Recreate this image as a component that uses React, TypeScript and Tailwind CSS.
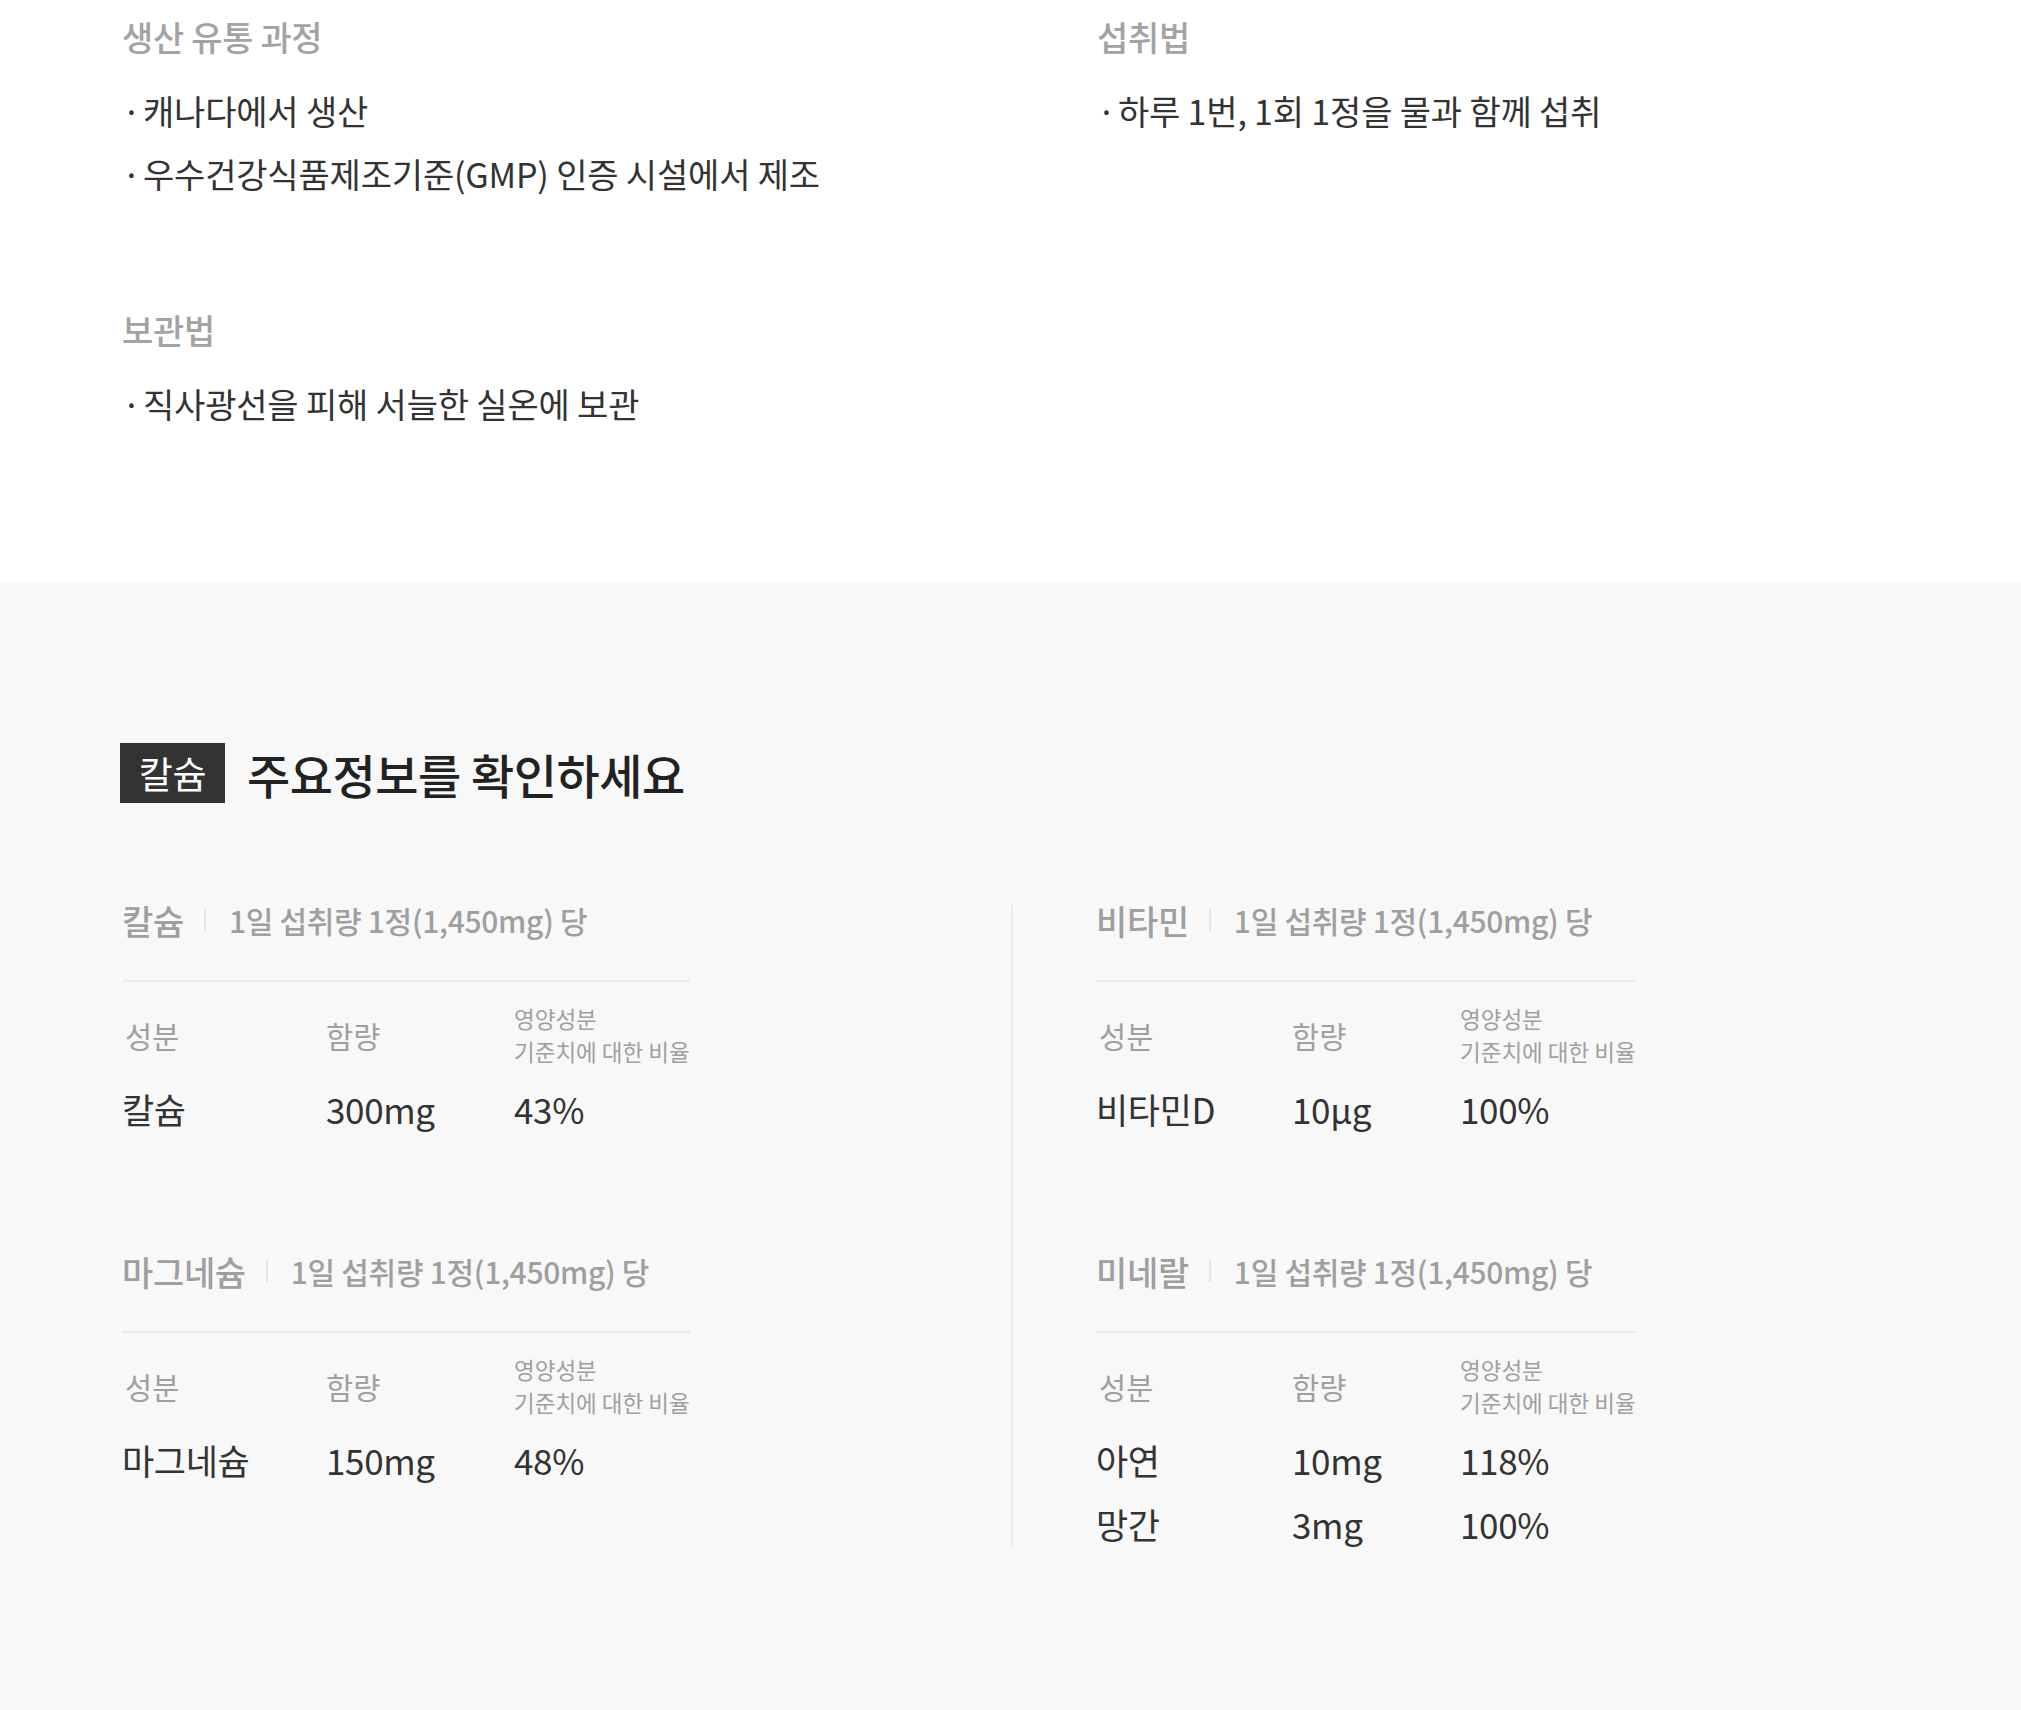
import type { ReactNode } from "react";

const font = { fontFamily: '"Noto Sans CJK KR", "Noto Sans", sans-serif' };

type Row = { name: string; amount: string; ratio: string };

interface Group {
  title: string;
  rows: Row[];
}

const leftGroups: Group[] = [
  { title: "칼슘", rows: [{ name: "칼슘", amount: "300mg", ratio: "43%" }] },
  { title: "마그네슘", rows: [{ name: "마그네슘", amount: "150mg", ratio: "48%" }] },
];

const rightGroups: Group[] = [
  { title: "비타민", rows: [{ name: "비타민D", amount: "10μg", ratio: "100%" }] },
  {
    title: "미네랄",
    rows: [
      { name: "아연", amount: "10mg", ratio: "118%" },
      { name: "망간", amount: "3mg", ratio: "100%" },
    ],
  },
];

function InfoBlock({ title, children }: { title: string; children: ReactNode }) {
  return (
    <div>
      <h3 className="text-[34px] leading-[40px] font-medium tracking-[-0.01em] text-[#a3a3a3]">{title}</h3>
      <ul className="mt-[22px]">{children}</ul>
    </div>
  );
}

function Item({ children }: { children: ReactNode }) {
  return (
    <li className="text-[34px] leading-[63px] tracking-[-0.005em] text-[#333]">
      <span className="mr-[2px]">·</span>
      {children}
    </li>
  );
}

function NutritionTable({ group, cols }: { group: Group; cols: [number, number, number] }) {
  const [c1, c2, c3] = cols;
  return (
    <div>
      <div className="flex h-[40px] items-center text-[#9f9f9f]">
        <span className="text-[34px] font-medium tracking-[-0.01em]">{group.title}</span>
        <span className="mr-[23px] ml-[20px] h-[22px] w-[2px] bg-[#e4e4e4]" />
        <span className="text-[30px] font-medium tracking-[-0.01em]">1일 섭취량 1정(1,450mg) 당</span>
      </div>
      <div className="mt-[40px] border-t-2 border-[#ebebeb]" style={{ width: c1 + c2 + c3 }}>
        <div className="mt-[18px] flex h-[70px] items-center text-[#a0a0a0]">
          <div className="pl-[3px] text-[29.5px]" style={{ width: c1 }}>성분</div>
          <div className="text-[29.5px]" style={{ width: c2 }}>함량</div>
          <div className="text-[22.5px] leading-[33px]" style={{ width: c3 }}>
            영양성분
            <br />
            기준치에 대한 비율
          </div>
        </div>
        <div className="mt-[17px] flex flex-col gap-[20px]">
          {group.rows.map((r) => (
            <div key={r.name} className="flex h-[44px] items-center text-[35px] tracking-[-0.01em] text-[#333]">
              <div style={{ width: c1 }}>{r.name}</div>
              <div style={{ width: c2 }}>{r.amount}</div>
              <div style={{ width: c3 }}>{r.ratio}</div>
            </div>
          ))}
        </div>
      </div>
    </div>
  );
}

export default function App() {
  return (
    <div className="flex min-h-screen flex-col bg-white" style={font}>
      <section className="grid grid-cols-[975px_1fr] pt-[17px] pb-[148px] pl-[122px]">
        <div>
          <InfoBlock title="생산 유통 과정">
            <Item>캐나다에서 생산</Item>
            <Item>우수건강식품제조기준(GMP) 인증 시설에서 제조</Item>
          </InfoBlock>
          <div className="mt-[105px]">
            <InfoBlock title="보관법">
              <Item>직사광선을 피해 서늘한 실온에 보관</Item>
            </InfoBlock>
          </div>
        </div>
        <div>
          <InfoBlock title="섭취법">
            <Item>하루 1번, 1회 1정을 물과 함께 섭취</Item>
          </InfoBlock>
        </div>
      </section>

      <section className="flex-1 bg-[#f8f8f8] pt-[160px] pb-[160px] pl-[120px]">
        <div className="flex h-[60px] items-center gap-[22px]">
          <span className="flex h-[60px] w-[105px] items-center justify-center bg-[#333] text-[37px] leading-none tracking-[-0.01em] text-white">
            칼슘
          </span>
          <h2 className="text-[47px] leading-none font-medium tracking-[-0.01em] text-[#222]">주요정보를 확인하세요</h2>
        </div>

        <div className="mt-[97px] flex pl-[2px]">
          <div className="flex w-[889px] flex-col gap-[120px]">
            {leftGroups.map((g) => (
              <NutritionTable key={g.title} group={g} cols={[204, 188, 176]} />
            ))}
          </div>
          <div className="mt-[5px] w-[2px] self-stretch bg-[#ececec]" />
          <div className="flex flex-col gap-[120px] pl-[83px]">
            {rightGroups.map((g) => (
              <NutritionTable key={g.title} group={g} cols={[196, 168, 176]} />
            ))}
          </div>
        </div>
      </section>
    </div>
  );
}
